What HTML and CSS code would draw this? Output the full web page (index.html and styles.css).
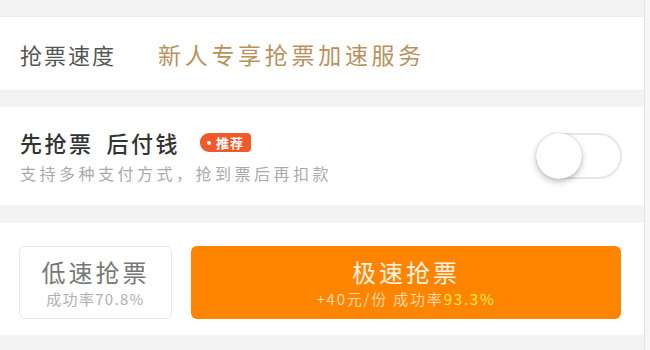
FILE: index.html
```html
<!DOCTYPE html>
<html lang="zh-CN">
<head>
<meta charset="utf-8">
<link rel="stylesheet" href="styles.css">
</head>
<body>
<div class="page">
  <div class="gap gap-top"></div>
  <section class="row speed">
    <span class="label">抢票速度</span>
    <span class="gold">新人专享抢票加速服务</span>
  </section>
  <div class="gap gap-mid"></div>
  <section class="row pay">
    <div class="pay-text">
      <div class="pay-title"><span>先抢票</span><span>后付钱</span><span class="tag">推荐</span></div>
      <div class="pay-sub">支持多种支付方式，抢到票后再扣款</div>
    </div>
    <div class="toggle"><div class="knob"></div></div>
  </section>
  <div class="gap gap-mid2"></div>
  <section class="row buttons">
    <div class="btn slow">
      <div class="btn-main">低速抢票</div>
      <div class="btn-sub">成功率70.8%</div>
    </div>
    <div class="btn fast">
      <div class="btn-main">极速抢票</div>
      <div class="btn-sub">+40元/份 成功率<span class="hl">93.3%</span></div>
    </div>
  </section>
  <div class="gap gap-bottom"></div>
</div>
</body>
</html>
```
FILE: styles.css
```css
html, body {
  margin: 0;
  padding: 0;
  background: #f6f6f6;
}
body {
  width: 650px;
  height: 350px;
  overflow: hidden;
  font-family: "Noto Sans CJK SC", "Noto Sans", sans-serif;
}
.page {
  width: 644px;
  border-right: 1px solid #e4e4e4;
  background: #f3f3f3;
}
.gap { background: #f3f3f3; }
.gap-top { height: 16px; border-bottom: 1px solid #ececec; }
.gap-mid { height: 16px; border-top: 1px solid #ececec; }
.gap-mid2 { height: 18px; }
.gap-bottom { height: 20px; }
.row { background: #fff; }

.speed {
  height: 73px;
  display: flex;
  align-items: center;
  padding-left: 20px;
}
.label {
  font-size: 22px;
  letter-spacing: 2px;
  color: #555;
  width: 138px;
}
.gold {
  font-size: 23px;
  letter-spacing: 3.7px;
  color: #b8925e;
}

.pay {
  height: 98px;
  display: flex;
  align-items: center;
  justify-content: space-between;
  padding: 0 22px 0 20px;
}
.pay-text { display: flex; flex-direction: column; gap: 4px; }
.pay-title {
  display: flex;
  align-items: center;
  font-size: 22px;
  font-weight: 500;
  letter-spacing: 2.5px;
  color: #333;
  line-height: 30px;
}
.pay-title span:nth-child(1) { margin-right: 13px; }
.pay-title span:nth-child(2) { margin-right: 20px; }
.tag {
  position: relative;
  background: #f05a2a;
  color: #fff;
  font-size: 13px;
  font-weight: 700;
  letter-spacing: 1px;
  line-height: 19px;
  height: 19px;
  padding: 0 7px 0 16px;
  border-radius: 9px 4px 4px 9px;
}
.tag::before {
  content: "";
  position: absolute;
  left: 7px;
  top: 8px;
  width: 4px;
  height: 4px;
  border-radius: 50%;
  background: #fff;
}
.pay-sub {
  font-size: 16px;
  letter-spacing: 3.5px;
  color: #aaa;
  line-height: 24px;
}
.toggle {
  width: 86px;
  height: 46px;
  border: 2px solid #e6e6e6;
  border-radius: 25px;
  background: #fff;
  position: relative;
  box-sizing: border-box;
}
.knob {
  position: absolute;
  left: -2px;
  top: -2px;
  width: 46px;
  height: 46px;
  border-radius: 50%;
  background: #fff;
  box-shadow: 0 3px 6px rgba(0,0,0,0.25), 0 0 1px rgba(0,0,0,0.3);
}

.buttons {
  height: 112px;
  box-sizing: border-box;
  display: flex;
  align-items: flex-start;
  gap: 19px;
  padding: 23px 23px 0 19px;
}
.btn {
  height: 73px;
  box-sizing: border-box;
  border-radius: 6px;
  display: flex;
  flex-direction: column;
  align-items: center;
  justify-content: center;
  gap: 3px;
}
.slow {
  width: 153px;
  border: 1px solid #e8e8e8;
  color: #777;
}
.fast {
  flex: 1;
  background: #ff8500;
  color: #fff3e0;
}
.btn-main {
  font-size: 24px;
  letter-spacing: 3px;
  line-height: 30px;
}
.btn-sub {
  font-size: 15px;
  letter-spacing: 1.3px;
  line-height: 18px;
}
.slow .btn-sub { color: #b0b0b0; }
.fast .btn-sub { color: #ffd8a0; letter-spacing: 1.8px; }
.hl { color: #ffe94a; }
```
